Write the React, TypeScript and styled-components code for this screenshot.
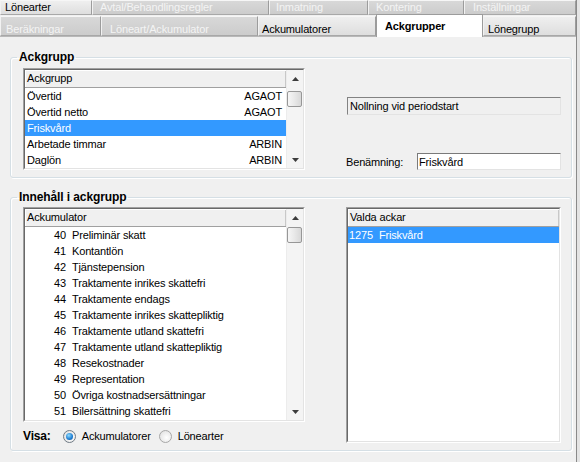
import * as React from "react";
import styled, { createGlobalStyle } from "styled-components";

type TabDef = { label: string; width: number; pad: number; disabled?: boolean; active?: boolean };

const topTabs: TabDef[] = [
  { label: "Lönearter", width: 92, pad: 4 },
  { label: "Avtal/Behandlingsregler", width: 177, pad: 7, disabled: true },
  { label: "Inmatning", width: 99, pad: 6, disabled: true },
  { label: "Kontering", width: 96, pad: 7, disabled: true },
  { label: "Inställningar", width: 112, pad: 8, disabled: true },
];

const bottomTabs: TabDef[] = [
  { label: "Beräkningar", width: 101, pad: 5, disabled: true },
  { label: "Löneart/Ackumulator", width: 157, pad: 8, disabled: true },
  { label: "Ackumulatorer", width: 118, pad: 3 },
  { label: "Ackgrupper", width: 107, pad: 8, active: true },
  { label: "Lönegrupp", width: 93, pad: 4 },
];

const groups = [
  { name: "Övertid", code: "AGAOT" },
  { name: "Övertid netto", code: "AGAOT" },
  { name: "Friskvård", code: "" },
  { name: "Arbetade timmar", code: "ARBIN" },
  { name: "Daglön", code: "ARBIN" },
];

const accumulators: [number, string][] = [
  [40, "Preliminär skatt"],
  [41, "Kontantlön"],
  [42, "Tjänstepension"],
  [43, "Traktamente inrikes skattefri"],
  [44, "Traktamente endags"],
  [45, "Traktamente inrikes skattepliktig"],
  [46, "Traktamente utland skattefri"],
  [47, "Traktamente utland skattepliktig"],
  [48, "Resekostnader"],
  [49, "Representation"],
  [50, "Övriga kostnadsersättningar"],
  [51, "Bilersättning skattefri"],
];

export default function App() {
  return (
    <>
      <GlobalStyle />
      <Window>
        <TabRow $top>
          {topTabs.map((t) => (
            <Tab key={t.label} $w={t.width} $pad={t.pad} $disabled={t.disabled} $top>
              {t.label}
            </Tab>
          ))}
        </TabRow>
        <TabRow>
          {bottomTabs.map((t) => (
            <Tab key={t.label} $w={t.width} $pad={t.pad} $disabled={t.disabled} $active={t.active}>
              {t.label}
            </Tab>
          ))}
        </TabRow>

        <Panel>
          <Group>
            <Legend>Ackgrupp</Legend>
            <GroupRow>
              <ListFrame $w={282} $h={102}>
                <ListInner>
                  <ListBody>
                    <ListHeader>Ackgrupp</ListHeader>
                    {groups.map((g, i) => (
                      <Row key={g.name} $selected={i === 2}>
                        <span>{g.name}</span>
                        <span>{g.code}</span>
                      </Row>
                    ))}
                  </ListBody>
                  <Scrollbar thumbOffset={4} />
                </ListInner>
              </ListFrame>
              <SideColumn>
                <SunkenLabel>Nollning vid periodstart</SunkenLabel>
                <FieldRow>
                  <FieldLabel>Benämning:</FieldLabel>
                  <TextInput readOnly value="Friskvård" />
                </FieldRow>
              </SideColumn>
            </GroupRow>
          </Group>

          <Group $gapTop>
            <Legend>Innehåll i ackgrupp</Legend>
            <GroupRow>
              <LeftColumn>
                <ListFrame $w={282} $h={215}>
                  <ListInner>
                    <ListBody>
                      <ListHeader>Ackumulator</ListHeader>
                      {accumulators.map(([nr, name]) => (
                        <AccRow key={nr}>
                          <AccNumber>{nr}</AccNumber>
                          <span>{name}</span>
                        </AccRow>
                      ))}
                    </ListBody>
                    <Scrollbar thumbOffset={1} />
                  </ListInner>
                </ListFrame>
                <ShowRow>
                  <ShowLabel>Visa:</ShowLabel>
                  <RadioOption>
                    <Radio $checked />
                    <span>Ackumulatorer</span>
                  </RadioOption>
                  <RadioOption>
                    <Radio />
                    <span>Lönearter</span>
                  </RadioOption>
                </ShowRow>
              </LeftColumn>
              <ListFrame $w={215} $h={236}>
                <ListInner>
                  <ListBody>
                    <ListHeader>Valda ackar</ListHeader>
                    <AccRow $selected>
                      <ChosenNumber>1275</ChosenNumber>
                      <span>Friskvård</span>
                    </AccRow>
                  </ListBody>
                </ListInner>
              </ListFrame>
            </GroupRow>
          </Group>
        </Panel>
      </Window>
    </>
  );
}

function Scrollbar({ thumbOffset }: { thumbOffset: number }) {
  return (
    <ScrollTrack>
      <ArrowButton>
        <svg width="7" height="4" viewBox="0 0 7 4">
          <polygon points="3.5,0 7,4 0,4" fill="#3c3c3c" />
        </svg>
      </ArrowButton>
      <Thumb style={{ marginTop: thumbOffset }} />
      <ArrowButton $bottom>
        <svg width="7" height="4" viewBox="0 0 7 4">
          <polygon points="0,0 7,0 3.5,4" fill="#3c3c3c" />
        </svg>
      </ArrowButton>
    </ScrollTrack>
  );
}

const GlobalStyle = createGlobalStyle`
  html, body {
    margin: 0;
    padding: 0;
    background: #e4e4e4;
  }
  body {
    font-family: "Liberation Sans", Arial, sans-serif;
    font-size: 11px;
    letter-spacing: -0.15px;
    color: #000;
  }
`;

const Window = styled.div`
  width: 576px;
  height: 462px;
  display: flex;
  flex-direction: column;
  background: #f0f0f0;
  border-right: 1px solid #8a8a8a;
  overflow: hidden;
`;

const TabRow = styled.div<{ $top?: boolean }>`
  display: flex;
  align-items: flex-start;
  height: ${(p) => (p.$top ? 15 : 20)}px;
  margin-top: ${(p) => (p.$top ? 0 : 1)}px;
  background: #dadada;
`;

const Tab = styled.div<{ $w: number; $pad: number; $disabled?: boolean; $active?: boolean; $top?: boolean }>`
  box-sizing: border-box;
  flex: none;
  width: ${(p) => p.$w}px;
  height: ${(p) => (p.$active ? 23 : p.$top ? 15 : 20)}px;
  margin-top: ${(p) => (p.$active ? -2 : 0)}px;
  padding: ${(p) => (p.$top ? 0 : p.$active ? 4 : 5)}px 0 0 ${(p) => p.$pad}px;
  line-height: ${(p) => (p.$top ? 12 : 14)}px;
  white-space: nowrap;
  border-right: 1px solid #9c9c9c;
  border-bottom: ${(p) => (p.$active ? "none" : "1px solid #a8a8a8")};
  border-top: ${(p) => (p.$active ? "1px solid #9c9c9c" : "1px solid #f6f6f6")};
  border-left: ${(p) => (p.$active ? "1px solid #9c9c9c" : "1px solid #f2f2f2")};
  background: ${(p) =>
    p.$active
      ? "#ffffff"
      : p.$disabled
      ? "linear-gradient(#d8d8d8, #cccccc)"
      : "linear-gradient(#efefef, #dedede)"};
  color: ${(p) => (p.$disabled ? "#f4f4f4" : "#000")};
  font-weight: ${(p) => (p.$active ? "bold" : "normal")};
  position: ${(p) => (p.$active ? "relative" : "static")};
  z-index: ${(p) => (p.$active ? 2 : "auto")};
`;

const Panel = styled.div`
  flex: 1;
  border-top: 1px solid #b8b8b8;
  padding: 14px 4px 0 10px;
  background: #f0f0f0;
`;

const Group = styled.fieldset<{ $gapTop?: boolean }>`
  margin: ${(p) => (p.$gapTop ? 13 : 0)}px 0 0;
  padding: ${(p) => (p.$gapTop ? 3 : 4)}px 10px 7px 12px;
  min-width: 0;
  border: 1px solid #d5dfe5;
  border-radius: 3px;
  box-shadow: inset 1px 1px 0 #ffffff, 1px 1px 0 #ffffff;
`;

const Legend = styled.legend`
  margin-left: -6px;
  padding: 0 2px;
  font-size: 12px;
  line-height: 13px;
  font-weight: bold;
  letter-spacing: -0.1px;
`;

const GroupRow = styled.div`
  display: flex;
  gap: 41px;
`;

const LeftColumn = styled.div`
  display: flex;
  flex-direction: column;
  width: 282px;
`;

const ListFrame = styled.div<{ $w: number; $h: number }>`
  box-sizing: border-box;
  flex: none;
  width: ${(p) => p.$w}px;
  height: ${(p) => p.$h}px;
  border: 1px solid;
  border-color: #a0a0a0 #ffffff #ffffff #a0a0a0;
  display: flex;
`;

const ListInner = styled.div`
  flex: 1;
  display: flex;
  border: 1px solid;
  border-color: #696969 #e3e3e3 #e3e3e3 #696969;
  background: #ffffff;
  overflow: hidden;
`;

const ListBody = styled.div`
  flex: 1;
  display: flex;
  flex-direction: column;
  min-width: 0;
`;

const ListHeader = styled.div`
  flex: none;
  height: 17px;
  line-height: 17px;
  padding-left: 2px;
  background: #f0f0f0;
  border-bottom: 1px solid #a0a0a0;
  box-shadow: inset 1px 1px 0 #ffffff, inset -1px 0 0 #c8c8c8;
`;

const Row = styled.div<{ $selected?: boolean }>`
  flex: none;
  height: 16px;
  line-height: 16px;
  display: flex;
  justify-content: space-between;
  padding: 0 4px 0 2px;
  background: ${(p) => (p.$selected ? "#3399ff" : "transparent")};
  color: ${(p) => (p.$selected ? "#ffffff" : "#000")};
`;

const AccRow = styled.div<{ $selected?: boolean }>`
  flex: none;
  height: 16px;
  line-height: 16px;
  display: flex;
  padding-left: 1px;
  white-space: nowrap;
  background: ${(p) => (p.$selected ? "#3399ff" : "transparent")};
  color: ${(p) => (p.$selected ? "#ffffff" : "#000")};
`;

const AccNumber = styled.span`
  width: 40px;
  text-align: right;
  margin-right: 6px;
`;

const ChosenNumber = styled.span`
  margin-right: 6px;
`;

const ScrollTrack = styled.div`
  flex: none;
  width: 17px;
  display: flex;
  flex-direction: column;
  background: #f4f4f4;
  border-left: 1px solid #ececec;
  box-sizing: border-box;
`;

const ArrowButton = styled.div<{ $bottom?: boolean }>`
  flex: none;
  height: 17px;
  display: flex;
  align-items: center;
  justify-content: center;
  margin-top: ${(p) => (p.$bottom ? "auto" : "0")};
`;

const Thumb = styled.div`
  flex: none;
  height: 16px;
  margin-right: 1px;
  box-sizing: border-box;
  border: 1px solid #979797;
  border-radius: 2px;
  background: linear-gradient(to right, #f6f6f6, #e8e8e8 50%, #d8d8d8);
`;

const SideColumn = styled.div`
  width: 215px;
  display: flex;
  flex-direction: column;
  padding-top: 29px;
`;

const SunkenLabel = styled.div`
  box-sizing: border-box;
  margin-left: 1px;
  height: 18px;
  line-height: 16px;
  padding-left: 2px;
  border: 1px solid;
  border-color: #828282 #e3e3e3 #e3e3e3 #828282;
  background: #f0f0f0;
`;

const FieldRow = styled.div`
  margin-top: auto;
  display: flex;
  align-items: center;
  height: 17px;
`;

const FieldLabel = styled.span`
  width: 71px;
`;

const TextInput = styled.input`
  box-sizing: border-box;
  width: 144px;
  height: 17px;
  margin: 0;
  padding: 0 1px;
  font: inherit;
  letter-spacing: inherit;
  color: #000;
  background: #ffffff;
  border: 1px solid;
  border-color: #7a7a7a #e3e3e3 #e3e3e3 #7a7a7a;
  outline: none;
`;

const ShowRow = styled.div`
  margin-top: 7px;
  height: 14px;
  display: flex;
  align-items: center;
`;

const ShowLabel = styled.span`
  font-size: 12px;
  font-weight: bold;
  margin-right: 12px;
`;

const RadioOption = styled.label`
  display: flex;
  align-items: center;
  gap: 6px;
  margin-right: 8px;
`;

const Radio = styled.span<{ $checked?: boolean }>`
  box-sizing: border-box;
  width: 13px;
  height: 13px;
  border-radius: 50%;
  border: 1px solid ${(p) => (p.$checked ? "#6f7a84" : "#a7a7a7")};
  background: radial-gradient(circle at 60% 60%, #ffffff, #dcdcdc);
  display: flex;
  align-items: center;
  justify-content: center;

  &::after {
    content: "";
    display: ${(p) => (p.$checked ? "block" : "none")};
    width: 7px;
    height: 7px;
    border-radius: 50%;
    background: radial-gradient(circle at 40% 35%, #8fdcff, #1c7bd0 60%, #0d4f97);
  }
`;
